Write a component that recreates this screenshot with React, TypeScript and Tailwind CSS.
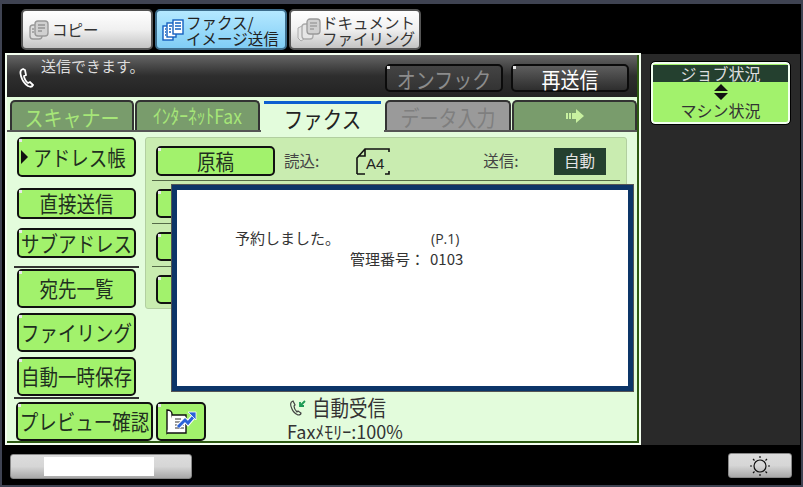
import type { ReactNode } from "react";

const font = "font-['Noto_Sans_CJK_JP','Liberation_Sans',sans-serif]";
const dot = "relative before:absolute before:top-0 before:left-0 before:w-[3px] before:h-[3px] before:bg-[#e8e8e8] before:content-['']";

function CopyIcon() {
  return (
    <svg width="22" height="22" viewBox="0 0 22 22" className="shrink-0">
      <rect x="2" y="6" width="12" height="14" rx="3" fill="#ddd" stroke="#999" strokeWidth="1.4" />
      <rect x="7" y="2" width="13" height="15" rx="3" fill="#d0d0d0" stroke="#999" strokeWidth="1.4" />
      <path d="M4 10h2M4 13h2M10 6h7M10 9h7M10 12h4" stroke="#777" strokeWidth="1.2" />
    </svg>
  );
}

function FaxIcon() {
  return (
    <svg width="22" height="24" viewBox="0 0 22 24" className="shrink-0">
      <rect x="1" y="8" width="10" height="14" fill="#fff" stroke="#1560c0" strokeWidth="1.4" />
      <rect x="5" y="5" width="9" height="14" fill="#fff" stroke="#1560c0" strokeWidth="1.4" />
      <rect x="11" y="2" width="10" height="14" fill="#fff" stroke="#1560c0" strokeWidth="1.4" />
      <path d="M3 11h1M3 14h1M3 17h1M7 8h3M7 11h2M7 14h2M13 5h6M13 8h6M13 11h6" stroke="#1560c0" strokeWidth="1.3" />
    </svg>
  );
}

function DocIcon() {
  return (
    <svg width="26" height="26" viewBox="0 0 26 26" className="shrink-0">
      <path d="M2 11l6-3v14l-3 2-3-3z" fill="#e6e6e6" stroke="#aaa" />
      <rect x="6" y="7" width="11" height="15" rx="3" fill="#e6e6e6" stroke="#aaa" strokeWidth="1.3" />
      <rect x="11" y="2" width="13" height="15" rx="3" fill="#d0d0d0" stroke="#999" strokeWidth="1.3" />
      <path d="M14 6h7M14 9h7M14 12h4" stroke="#888" strokeWidth="1.2" />
    </svg>
  );
}

function TopTab({ active, w, children }: { active?: boolean; w: string; children: ReactNode }) {
  return (
    <div
      className={`${w} h-[41px] rounded-[5px] border-2 flex items-center ${
        active
          ? "bg-gradient-to-b from-[#b4e8ff] to-[#7fcdf5] border-[#3d6d8c]"
          : "bg-gradient-to-b from-white via-[#f0f0f0] to-[#c4c4c4] border-[#555]"
      }`}
    >
      {children}
    </div>
  );
}

function GreenBtn({ h, w = "w-[119px]", children }: { h: string; w?: string; children?: ReactNode }) {
  return (
    <div
      className={`${dot} ${h} ${w} shrink-0 rounded-[5px] border-2 border-[#111] bg-[#a2f26c] text-[#1f2f1f] text-[18.5px] leading-none flex items-center justify-center whitespace-nowrap`}
    >
      {children}
    </div>
  );
}

function Tall({ children }: { children: ReactNode }) {
  return <span className="inline-block scale-y-[1.14]">{children}</span>;
}

function DarkBtn({ dim, children }: { dim?: boolean; children: ReactNode }) {
  return (
    <div
      className={`${dot} w-[118px] h-[28px] rounded-[5px] border-2 border-[#0b0b0b] flex items-center justify-center text-[19px] leading-none ${
        dim ? "bg-gradient-to-b from-[#444] to-[#333] text-[#8c8c8c]" : "bg-gradient-to-b from-[#5e5e5e] to-[#2e2e2e] text-white"
      }`}
    >
      <Tall>{children}</Tall>
    </div>
  );
}

function ModeTab({ w, cls, children }: { w: string; cls: string; children: ReactNode }) {
  return (
    <div className={`${w} h-[30px] rounded-t-[5px] border-2 border-b-0 border-[#333] flex items-center justify-center leading-none whitespace-nowrap ${cls}`}>
      {children}
    </div>
  );
}

function SettingRow({ children }: { children?: ReactNode }) {
  return <div className="h-[43px] pt-[8px] pl-[4px] border-b-[1px] border-[#556b48]">{children}</div>;
}

function Sun() {
  return (
    <svg width="22" height="22" viewBox="0 0 22 22" fill="none" stroke="#111">
      <circle cx="11" cy="11" r="6" strokeWidth="1.2" />
      <path d="M11 1v2M11 19v2M1 11h2M19 11h2M4 4l1.5 1.5M16.5 16.5L18 18M18 4l-1.5 1.5M5.5 16.5L4 18" strokeWidth="1.2" />
    </svg>
  );
}

export default function App() {
  return (
    <div className={`${font} w-[803px] h-[487px] overflow-hidden bg-black border-t-[4px] border-b-[2px] border-x-[2px] border-[#3f4352]`}>
      {/* top function tabs */}
      <div className="h-[49px] pt-[5px] pl-[19px] flex gap-[2px]">
        <TopTab w="w-[132px]">
          <div className="ml-[5px] flex items-center gap-[2px] text-[15.5px] text-[#333]">
            <CopyIcon />
            <span>コピー</span>
          </div>
        </TopTab>
        <TopTab w="w-[132px]" active>
          <div className="ml-[5px] flex items-center gap-[2px] text-[15.5px] leading-[16px] text-[#222] whitespace-nowrap">
            <FaxIcon />
            <span>
              ファクス/
              <br />
              イメージ送信
            </span>
          </div>
        </TopTab>
        <TopTab w="w-[132px]">
          <div className="ml-[5px] flex items-center text-[15.5px] leading-[16px] text-[#333] whitespace-nowrap">
            <DocIcon />
            <span>
              ドキュメント
              <br />
              ファイリング
            </span>
          </div>
        </TopTab>
      </div>

      <div className="flex h-[392px] pl-[3px]">
        {/* main panel */}
        <div className="relative w-[636px] h-[392px] bg-[#f4fff0] p-[2px]">
          <div className="relative h-full bg-[#e3fcdc] border-b-2 border-r-2 border-[#2d5a12]">
            {/* status bar */}
            <div className="h-[42px] bg-gradient-to-b from-[#666] via-[#2e2e2e] to-[#222] flex pl-[10px]">
              <svg width="20" height="24" viewBox="0 0 20 24" fill="none" stroke="#fff" strokeWidth="1.8" className="mt-[12px] shrink-0">
                <path d="M6 2c-3 1-3 4-2 7 1 4 4 8 7 10 2 1 4 1 5-1l-3-3-2 1c-2-1-4-5-4-7l2-1-1-5z" />
              </svg>
              <span className="ml-[4px] text-[15px] leading-[22px] text-[#ddd] w-[344px] h-fit shrink-0">送信できます。</span>
              <div className="mt-[9px] flex gap-[8px] h-fit">
                <DarkBtn dim>オンフック</DarkBtn>
                <DarkBtn>再送信</DarkBtn>
              </div>
            </div>

            {/* mode tabs */}
            <div className="h-[30px] mt-[3px] pl-[3px] flex gap-[1px]">
              <ModeTab w="w-[124px]" cls="bg-[#799c6c] text-[#a6e678] text-[19px]"><Tall>スキャナー</Tall></ModeTab>
              <ModeTab w="w-[125px]" cls="bg-[#799c6c] text-[#a6e678] text-[17.5px]"><Tall>ｲﾝﾀｰﾈｯﾄFax</Tall></ModeTab>
              <div className="relative z-10 w-[123px] h-[33px] bg-[#e3fcdc] text-[#222] text-[19.5px] leading-none flex flex-col">
                <div className="h-[3px] mx-[3px] mt-[1px] bg-[#0d5fd0]"></div>
                <div className="flex-1 flex items-center justify-center"><Tall>ファクス</Tall></div>
              </div>
              <ModeTab w="w-[126px]" cls="bg-[#9a9a9a] text-[#7f7f7f] text-[19px]"><Tall>データ入力</Tall></ModeTab>
              <ModeTab w="w-[125px]" cls="bg-[#799c6c]">
                <svg width="18" height="14" viewBox="0 0 18 14" fill="#c8f0a0">
                  <path d="M0 4h2v6H0zM3 4h2v6H3zM6 4h4V0l8 7-8 7v-4H6z" />
                </svg>
              </ModeTab>
            </div>
            <div className="h-[2px] bg-[#555]"></div>

            <div className="flex pt-[5px] pl-[10px] h-[268px]">
              {/* left button column */}
              <div className="w-[128px] shrink-0 flex flex-col">
                <GreenBtn h="h-[40px]">
                  <div className="flex items-center gap-[5px] pr-[6px]">
                    <svg width="7" height="14" viewBox="0 0 7 14" fill="#111" className="shrink-0">
                      <path d="M0 0l7 7-7 7z" />
                    </svg>
                    <Tall>アドレス帳</Tall>
                  </div>
                </GreenBtn>
                <div className="h-[11px] shrink-0"></div>
                <GreenBtn h="h-[31px]"><Tall>直接送信</Tall></GreenBtn>
                <div className="h-[9px] shrink-0"></div>
                <GreenBtn h="h-[30px]"><Tall>サブアドレス</Tall></GreenBtn>
                <div className="w-[125px] -ml-[3px] h-[2px] bg-[#333] mt-[8px] mb-[1px] shrink-0"></div>
                <GreenBtn h="h-[39px]"><Tall>宛先一覧</Tall></GreenBtn>
                <div className="h-[5px] shrink-0"></div>
                <GreenBtn h="h-[39px]"><Tall>ファイリング</Tall></GreenBtn>
                <div className="h-[5px] shrink-0"></div>
                <GreenBtn h="h-[39px]"><Tall>自動一時保存</Tall></GreenBtn>
                <div className="w-[125px] -ml-[3px] h-[2px] bg-[#333] mt-[1px] shrink-0"></div>
              </div>

              {/* settings area */}
              <div className="w-[482px] h-[172px] rounded-[3px] bg-[#c9ecb0] border border-[#b2cfa0] px-[6px] shrink-0">
                <SettingRow>
                  <div className="flex items-center">
                    <GreenBtn h="h-[30px]"><Tall>原稿</Tall></GreenBtn>
                    <span className="ml-[9px] text-[15.5px] text-[#444] leading-none">読込:</span>
                    <svg width="34" height="28" viewBox="0 0 34 28" fill="none" stroke="#111" strokeWidth="1.6" className="ml-[37px] shrink-0">
                      <path d="M1 27V11L9 2h24v3M1 27h8M29 27h4v-3M9 2v7H2" />
                      <text x="10" y="22" fontSize="15" fill="#222" stroke="none" fontFamily="Liberation Sans">A4</text>
                    </svg>
                    <span className="ml-[93px] text-[15.5px] text-[#444] leading-none">送信:</span>
                    <div className="ml-[35px] w-[52px] h-[27px] bg-[#24402f] text-[#e4e4e4] text-[15.5px] leading-none flex items-center justify-center">自動</div>
                  </div>
                </SettingRow>
                <SettingRow>
                  <GreenBtn h="h-[29px]" />
                </SettingRow>
                <SettingRow>
                  <GreenBtn h="h-[29px]" />
                </SettingRow>
                <div className="pt-[8px] pl-[4px]">
                  <GreenBtn h="h-[29px]" />
                </div>
              </div>
            </div>

            {/* bottom row */}
            <div className="flex pl-[9px] gap-[3px] mt-[2px]">
              <GreenBtn h="h-[39px]" w="w-[137px]"><Tall>プレビュー確認</Tall></GreenBtn>
              <GreenBtn h="h-[39px]" w="w-[50px]">
                <svg width="34" height="28" viewBox="0 0 34 28" fill="none">
                  <path d="M3 2c3 0 5 2 5 4v17c-2 0-4 1-5 2z" fill="#fff" stroke="#111" strokeWidth="1.4" />
                  <path d="M8 7h14v18H3" fill="#fff" stroke="#111" strokeWidth="1.4" />
                  <path d="M11 11h6M11 14h7M11 17h9M11 20h9" stroke="#333" />
                  <path d="M14 19l7-7 3 3 6-7" stroke="#fff" strokeWidth="5" />
                  <path d="M14 19l7-7 3 3 6-7" stroke="#2a62d8" strokeWidth="3" />
                  <path d="M24 4h8v8z" fill="#2a62d8" stroke="#fff" strokeWidth="0.8" />
                </svg>
              </GreenBtn>
              <div className="ml-[78px] -mt-[8px] text-[#333] text-center">
                <div className="flex items-center justify-center gap-[4px] pr-[16px] text-[18.5px] leading-[27px] whitespace-nowrap">
                  <svg width="20" height="20" viewBox="0 0 20 20" fill="none" stroke="#444" strokeWidth="1.2">
                    <path d="M5 3C2 4 2 7 4 11c1 3 4 5 6 6 2 0 3-1 3-2l-3-2-1 1c-1-1-3-4-3-6l1-1-2-4z" />
                    <path d="M17 3l-5 5M12 4v4h4" stroke="#1d9a55" strokeWidth="1.8" />
                  </svg>
                  <Tall>自動受信</Tall>
                </div>
                <div className="text-[18px] leading-[20px] whitespace-nowrap">Faxﾒﾓﾘｰ:100%</div>
              </div>
            </div>
          </div>

          {/* dialog */}
          <div className="absolute left-[167px] top-[132px] w-[461px] h-[206px] border-[5px] border-[#0c3568] outline outline-1 outline-[#555] bg-white text-[#333]">
            <div className="absolute left-[58px] top-[38px] text-[15px] leading-[20px]">予約しました。</div>
            <div className="absolute left-[254px] top-[40px] text-[14px] leading-[18px] font-['Open_Sans','Liberation_Sans',sans-serif]">(P.1)</div>
            <div className="absolute left-[173px] top-[59px] text-[15px] leading-[20px] whitespace-nowrap">
              管理番号：<span className="ml-[5px]">0103</span>
            </div>
          </div>
        </div>

        {/* right panel */}
        <div className="w-[159px] mt-[1px] h-[391px] bg-[#292929] pt-[8px] pl-[10px]">
          <div className="w-[139px] h-[62px] rounded-[4px] border-2 border-[#f2fff0] outline outline-1 outline-black bg-[#a2f26c] text-[#333] text-[16px] flex flex-col items-center">
            <div className="w-[135px] h-[17px] mt-[1px] bg-[#24402f] text-[#ddd] leading-[17px] text-center">ジョブ状況</div>
            <svg width="16" height="18" viewBox="0 0 16 18" fill="#111" className="mt-[1px] shrink-0">
              <path d="M8 1l7 7H1zM1 10h14l-7 7z" />
            </svg>
            <div className="leading-[18px]">マシン状況</div>
          </div>
        </div>
      </div>

      {/* bottom bar */}
      <div className="flex justify-between items-start pl-[8px] pr-[9px]">
        <div className="mt-[9px] w-[182px] h-[25px] rounded-[3px] border border-[#888] bg-gradient-to-b from-[#dcdcdc] via-[#d6d6d6] to-[#a8a8a8] flex pt-[2px] pl-[33px]">
          <div className="w-[110px] h-[19px] bg-white"></div>
        </div>
        <div className="mt-[8px] w-[64px] h-[25px] rounded-[3px] border border-[#888] bg-gradient-to-b from-[#dcdcdc] via-[#d6d6d6] to-[#a8a8a8] flex items-center justify-center">
          <Sun />
        </div>
      </div>
    </div>
  );
}
